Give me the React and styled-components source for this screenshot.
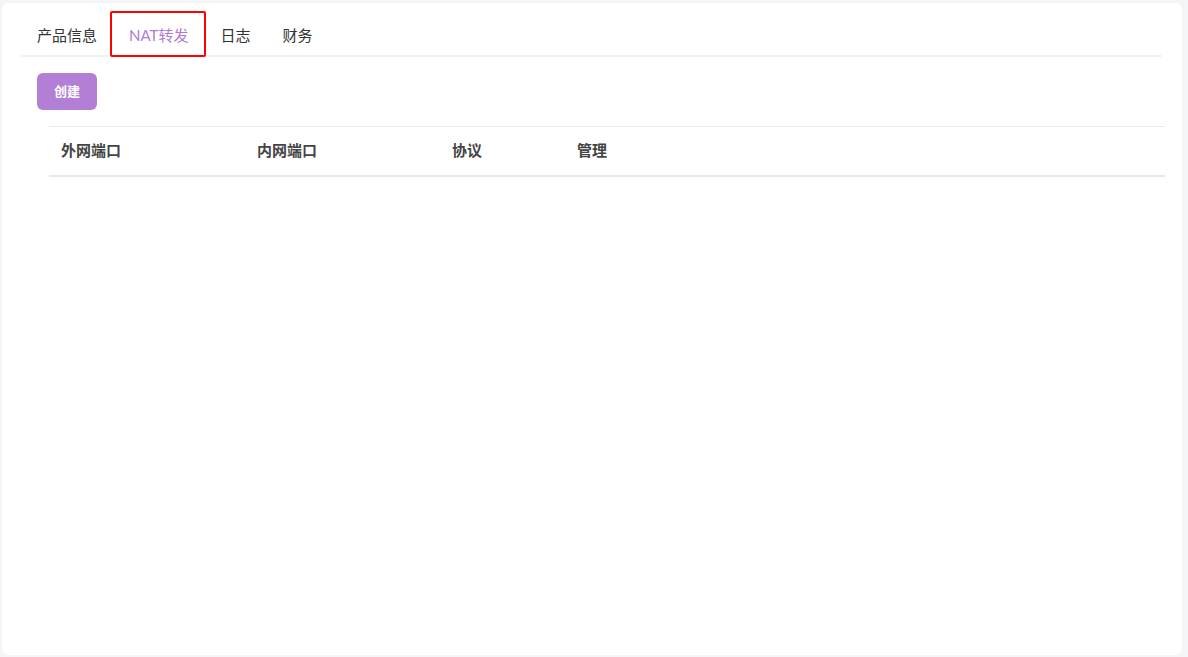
import React from "react";
import styled, { createGlobalStyle } from "styled-components";

const Global = createGlobalStyle`
  html, body { margin: 0; padding: 0; background: #f4f5f7; }
  body { font-family: "Lato", "Noto Sans CJK SC", sans-serif; }
  * { box-sizing: border-box; }
`;

const Page = styled.div`
  height: 657px;
  padding: 3px 6px 2px 2px;
  display: flex;
`;

const Card = styled.div`
  flex: 1;
  background: #fff;
  border-radius: 6px;
  padding: 10px 20px 0 19px;
  display: flex;
  flex-direction: column;
`;

const Tabs = styled.div`
  display: flex;
  border-bottom: 2px solid #f2f2f4;
  height: 44px;
`;

const Tab = styled.div`
  position: relative;
  padding: 2px 16px 0;
  line-height: 40px;
  font-size: 15px;
  color: ${(p) => (p.$active ? "#b07bd5" : "#333")};
  cursor: pointer;
`;

const Highlight = styled.span`
  position: absolute;
  left: -3px;
  right: -2px;
  top: -2px;
  bottom: -2px;
  border: 2px solid #ff0000;
  border-radius: 2px;
  pointer-events: none;
`;

const Toolbar = styled.div`
  padding: 16px 16px 0;
  display: flex;
`;

const Button = styled.button`
  height: 37px;
  width: 60px;
  padding: 0 0 2px;
  border: none;
  border-radius: 6px;
  background: #b37ed6;
  color: #fff;
  font-family: "Lato", "Noto Sans CJK SC", sans-serif;
  font-weight: 700;
  font-size: 13px;
  cursor: pointer;
`;

const Table = styled.table`
  margin: 16px -3px 0 28px;
  border-collapse: collapse;
  width: calc(100% - 25px);
`;

const Th = styled.th`
  text-align: left;
  font-size: 15px;
  font-weight: 700;
  color: #444;
  height: 49px;
  padding: 0 12px 3px;
  border-top: 1px solid #eee7f6;
  border-bottom: 2px solid #ede5f6;
  width: ${(p) => p.$w || "auto"};
`;

export default function App() {
  const tabs = ["产品信息", "NAT转发", "日志", "财务"];
  return (
    <>
      <Global />
      <Page>
        <Card>
          <Tabs>
            {tabs.map((t, i) => (
              <Tab key={t} $active={i === 1}>
                {t}
                {i === 1 && <Highlight />}
              </Tab>
            ))}
          </Tabs>
          <Toolbar>
            <Button>创建</Button>
          </Toolbar>
          <Table>
            <thead>
              <tr>
                <Th $w="196px">外网端口</Th>
                <Th $w="195px">内网端口</Th>
                <Th $w="125px">协议</Th>
                <Th>管理</Th>
              </tr>
            </thead>
          </Table>
        </Card>
      </Page>
    </>
  );
}
